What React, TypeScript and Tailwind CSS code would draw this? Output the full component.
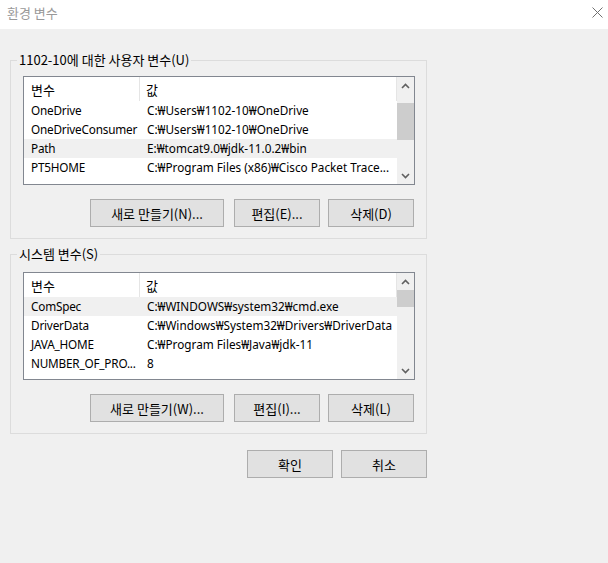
import React from "react";

type Row = { name: string; value: string };

const USER_ROWS: Row[] = [
  { name: "OneDrive", value: "C:₩Users₩1102-10₩OneDrive" },
  { name: "OneDriveConsumer", value: "C:₩Users₩1102-10₩OneDrive" },
  { name: "Path", value: "E:₩tomcat9.0₩jdk-11.0.2₩bin" },
  { name: "PT5HOME", value: "C:₩Program Files (x86)₩Cisco Packet Trace..." },
];

const SYSTEM_ROWS: Row[] = [
  { name: "ComSpec", value: "C:₩WINDOWS₩system32₩cmd.exe" },
  { name: "DriverData", value: "C:₩Windows₩System32₩Drivers₩DriverData" },
  { name: "JAVA_HOME", value: "C:₩Program Files₩Java₩jdk-11" },
  { name: "NUMBER_OF_PRO...", value: "8" },
];

// Korean labels read larger than the latin list text, so they get their own font
const KR = "font-['Noto_Sans_CJK_KR',sans-serif] text-[13px]";

function Chevron({ down }: { down?: boolean }) {
  return (
    <svg width="9" height="6" viewBox="0 0 9 6" className={down ? "rotate-180" : ""}>
      <path d="M1 5 L4.5 1.5 L8 5" fill="none" stroke="#606060" strokeWidth="1.6" />
    </svg>
  );
}

function VarList({
  rows,
  selected,
  height,
  thumbOffset,
  thumbHeight,
}: {
  rows: Row[];
  selected: number;
  height: string;
  thumbOffset: string;
  thumbHeight: string;
}) {
  return (
    <div className={`flex w-[392px] border border-[#828790] bg-white overflow-hidden ${height}`}>
      <div className="flex-1 min-w-0 overflow-hidden">
        <div className={`flex h-[24px] items-center border-r border-[#e5e5e5] ${KR}`}>
          <div className="w-[116px] h-full flex items-center pl-[7px] border-r border-[#e5e5e5]">변수</div>
          <div className="pl-[6px]">값</div>
        </div>
        {rows.map((r, i) => (
          <div
            key={r.name}
            className={`flex h-[19px] leading-[19px] whitespace-nowrap ${i === selected ? "bg-[#f0f0f0]" : ""}`}
          >
            <div className="w-[117px] shrink-0 pl-[7px] overflow-hidden tracking-[-0.2px]">{r.name}</div>
            <div className="pl-[6px] overflow-hidden">{r.value}</div>
          </div>
        ))}
      </div>
      <div className="w-[17px] flex flex-col bg-[#f0f0f0]">
        <div className="h-[17px] flex items-center justify-center">
          <Chevron />
        </div>
        <div className={`flex-1 ${thumbOffset}`}>
          <div className={`bg-[#cdcdcd] ${thumbHeight}`} />
        </div>
        <div className="h-[17px] flex items-center justify-center">
          <Chevron down />
        </div>
      </div>
    </div>
  );
}

function Btn({ label, width }: { label: string; width: string }) {
  return (
    <button className={`h-[28px] ${width} border border-[#adadad] bg-[#e1e1e1] text-black ${KR}`}>
      {label}
    </button>
  );
}

function Group({
  label,
  rows,
  selected,
  listHeight,
  listGap,
  thumbOffset,
  thumbHeight,
  buttons,
  className,
}: {
  label: string;
  rows: Row[];
  selected: number;
  listHeight: string;
  listGap: string;
  thumbOffset: string;
  thumbHeight: string;
  buttons: [string, string, string];
  className?: string;
}) {
  return (
    <fieldset className={`w-[417px] border border-[#dcdcdc] pl-[12px] pb-[11px] ${className ?? ""}`}>
      <legend className={`ml-[-6px] px-[2px] leading-[16px] ${KR}`}>{label}</legend>
      <div className={listGap}>
        <VarList
          rows={rows}
          selected={selected}
          height={listHeight}
          thumbOffset={thumbOffset}
          thumbHeight={thumbHeight}
        />
      </div>
      <div className="w-[391px] flex justify-end mt-[14px]">
        <Btn label={buttons[0]} width="w-[134px]" />
        <div className="w-[10px]" />
        <Btn label={buttons[1]} width="w-[86px]" />
        <div className="w-[8px]" />
        <Btn label={buttons[2]} width="w-[86px]" />
      </div>
    </fieldset>
  );
}

export default function App() {
  return (
    <div className="w-[608px] h-[563px] bg-[#f0f0f0] text-[11.75px] leading-none text-black font-['Noto_Sans','Noto_Sans_CJK_KR',sans-serif]">
      <div className="h-[29px] bg-white flex items-start justify-between">
        <span className={`pl-[7px] pt-[6px] text-[#999999] ${KR}`}>환경 변수</span>
        <svg width="11" height="11" viewBox="0 0 11 11" className="mt-[7px] mr-[5px]">
          <path d="M0.5 0.5 L10.5 10.5 M10.5 0.5 L0.5 10.5" stroke="#707070" strokeWidth="1" />
        </svg>
      </div>
      <div className="px-[10px] pt-[23px]">
        <Group
          label="1102-10에 대한 사용자 변수(U)"
          rows={USER_ROWS}
          selected={2}
          listHeight="h-[109px]"
          listGap="mt-[8px]"
          thumbOffset="pt-[9px]"
          thumbHeight="h-[37px]"
          buttons={["새로 만들기(N)...", "편집(E)...", "삭제(D)"]}
        />
        <Group
          className="mt-[7px]"
          label="시스템 변수(S)"
          rows={SYSTEM_ROWS}
          selected={0}
          listHeight="h-[108px]"
          listGap="mt-[10px]"
          thumbOffset="pt-0"
          thumbHeight="h-[17px]"
          buttons={["새로 만들기(W)...", "편집(I)...", "삭제(L)"]}
        />
        <div className="w-[417px] flex justify-end mt-[16px]">
          <Btn label="확인" width="w-[86px]" />
          <div className="w-[8px]" />
          <Btn label="취소" width="w-[86px]" />
        </div>
      </div>
    </div>
  );
}
